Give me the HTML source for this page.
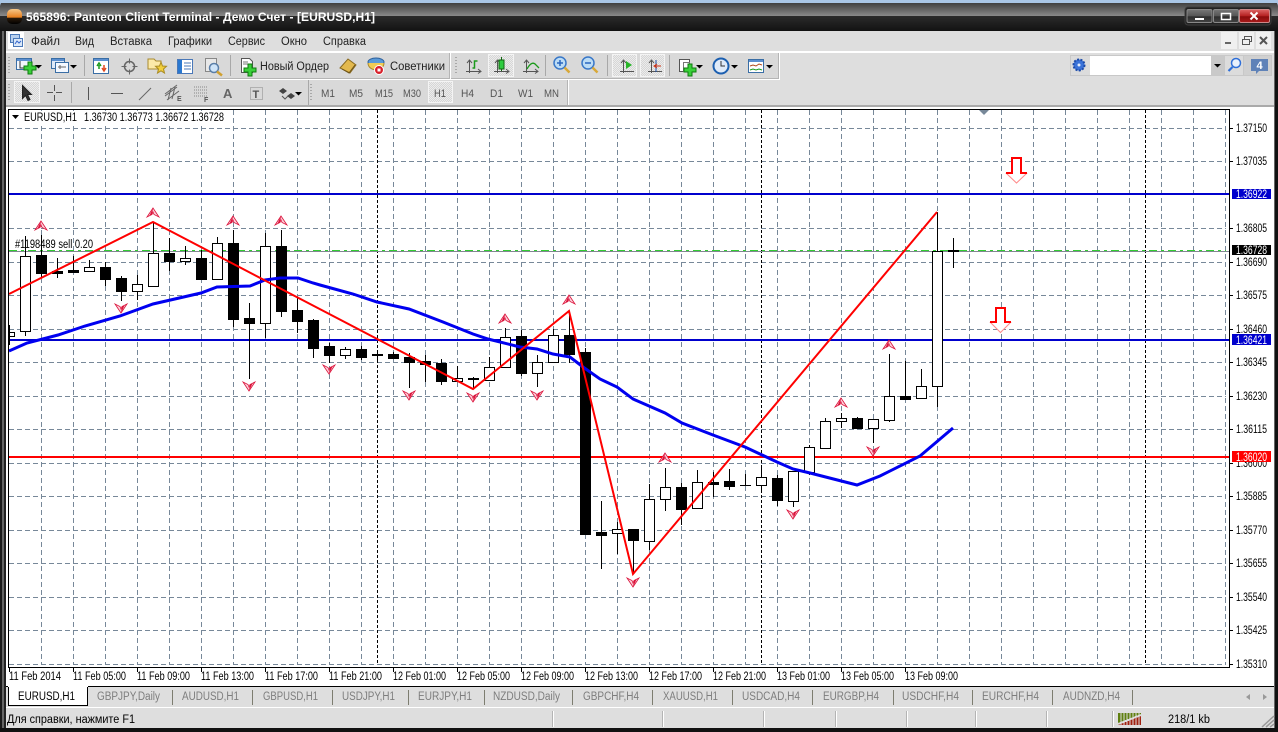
<!DOCTYPE html>
<html><head><meta charset="utf-8"><title>Panteon Client Terminal</title>
<style>
html,body{margin:0;padding:0;background:#000;width:1278px;height:732px;overflow:hidden}
svg{display:block}
text{font-family:"Liberation Sans","Noto Sans CJK SC",sans-serif;font-size:11.5px;fill:#000}
.c{shape-rendering:crispEdges}
.ax text{font-size:11.5px}
.tab text{font-size:11.5px;fill:#7d7d7d}
.menu text{font-size:11.5px;fill:#222}
.tf text{font-size:11px;fill:#555}
</style></head><body>
<svg width="1278" height="732" viewBox="0 0 1278 732" xmlns="http://www.w3.org/2000/svg">
<defs>
<linearGradient id="t1" x1="0" y1="0" x2="0" y2="1"><stop offset="0" stop-color="#3f3f3f"/><stop offset="1" stop-color="#8a8a8a"/></linearGradient>
<linearGradient id="t2" x1="0" y1="0" x2="0" y2="1"><stop offset="0" stop-color="#2b2b2b"/><stop offset="1" stop-color="#141414"/></linearGradient>
<linearGradient id="orb" x1="0" y1="0" x2="0" y2="1"><stop offset="0" stop-color="#f6c88a"/><stop offset=".55" stop-color="#e8801e"/><stop offset=".6" stop-color="#2a1a0a"/><stop offset="1" stop-color="#000"/></linearGradient>
<linearGradient id="btn" x1="0" y1="0" x2="0" y2="1"><stop offset="0" stop-color="#777"/><stop offset=".5" stop-color="#555"/><stop offset=".55" stop-color="#2d2d2d"/><stop offset="1" stop-color="#444"/></linearGradient>
<linearGradient id="red" x1="0" y1="0" x2="0" y2="1"><stop offset="0" stop-color="#d66"/><stop offset=".5" stop-color="#b52020"/><stop offset=".55" stop-color="#8a0c0c"/><stop offset="1" stop-color="#a81a1a"/></linearGradient>
<pattern id="hat" width="2" height="2" patternUnits="userSpaceOnUse"><rect width="2" height="2" fill="#d6d6d6"/><rect width="1" height="1" fill="#ececec"/><rect x="1" y="1" width="1" height="1" fill="#ececec"/></pattern>
<g id="fu"><path d="M0-5L-6 4-1 1.500 0-1 1 1.500 6 4Z" fill="#fbd0da" stroke="#dc143c" stroke-width=".8"/><path d="M0-5L-3.500 2.500-1 1.500Z" fill="#dc143c"/></g>
<g id="fd"><path d="M0 5L-6-4-1-1.500 0 1 1-1.500 6-4Z" fill="#fbd0da" stroke="#dc143c" stroke-width=".8"/><path d="M0 5L3.500-2.500 1-1.500Z" fill="#dc143c"/></g>
<path id="pl" d="M-2-6h4v4h4v4h-4v4h-4v-4h-4v-4h4z" fill="#39d039" stroke="#0e7a0e"/>
<path id="dd" d="M0 0h7l-3.500 3.500z" fill="#000"/>
</defs>

<!-- window frame -->
<rect width="1278" height="732" fill="#111"/>
<rect width="1278" height="3" fill="#a9c6e6"/>
<rect y="3" width="1278" height="13" fill="url(#t1)"/>
<rect y="16" width="1278" height="14" fill="url(#t2)"/>
<path d="M0 0h5Q1 1 0 6ZM1278 0h-5q4 1 5 6Z" fill="#a9c6e6"/>
<g class="c"><rect x="2" y="31" width="2" height="697" fill="#555"/><rect x="1274" y="31" width="1" height="697" fill="#666"/></g>
<rect x="7" y="9" width="15" height="15" rx="5" fill="url(#orb)"/>
<text x="26" y="21" style="font-size:12px;fill:#fff;font-weight:700" textLength="349" lengthAdjust="spacing">565896: Panteon Client Terminal - Демо Счет - [EURUSD,H1]</text>
<!-- caption buttons -->
<rect x="1185" y="7" width="86" height="18" rx="3" fill="#222" stroke="#3c3c3c"/>
<rect x="1187" y="9.500" width="25" height="13" rx="1.500" fill="url(#btn)" stroke="#888"/>
<rect x="1213.500" y="9.500" width="25" height="13" rx="1.500" fill="url(#btn)" stroke="#888"/>
<rect x="1239.500" y="9.500" width="30" height="13" rx="1.500" fill="url(#red)" stroke="#c88"/>
<rect x="1195" y="18" width="9" height="2" fill="#fff"/>
<rect x="1221.500" y="13.500" width="9" height="6" fill="none" stroke="#fff" stroke-width="1.500"/>
<path d="M1250.500 12.500l7 7m0-7l-7 7" stroke="#fff" stroke-width="2" fill="none"/>

<!-- client -->
<g class="c">
<rect x="6" y="31" width="1268" height="697" fill="#dedede"/>
<rect x="6" y="51" width="1268" height="2" fill="#fff"/>
<rect x="6" y="53" width="1268" height="52" fill="#dedede"/>
<rect x="6" y="53" width="444" height="26" fill="#d9d9d9"/>
<rect x="450" y="53" width="329" height="26" fill="#d9d9d9"/>
<rect x="6" y="78" width="773" height="1" fill="#b5b5b5"/>
<rect x="6" y="79" width="773" height="1" fill="#fff"/>
<rect x="449" y="53" width="1" height="26" fill="#b5b5b5"/>
<rect x="450" y="53" width="1" height="26" fill="#fff"/>
<rect x="778" y="53" width="1" height="26" fill="#b5b5b5"/>
<rect x="779" y="53" width="1" height="27" fill="#fff"/>
<rect x="6" y="80" width="562" height="25" fill="#d9d9d9"/>
<rect x="567" y="80" width="1" height="25" fill="#b5b5b5"/>
<rect x="568" y="80" width="1" height="25" fill="#fff"/>
<rect x="6" y="105" width="1268" height="2" fill="#aaa"/>
<rect x="6" y="107" width="1268" height="1" fill="#fff"/>
</g>

<!-- menu -->
<rect x="8" y="32" width="16" height="17" fill="#fff" class="c"/>
<rect x="10.500" y="34.500" width="9" height="8" fill="#b8d0ee" stroke="#4a78b8"/>
<rect x="13.500" y="38.500" width="9" height="8" fill="#dbe8f8" stroke="#4a78b8"/>
<path d="M15 44l2-3 2 2 2-2" stroke="#36c" fill="none"/>
<g class="menu">
<text x="31" y="45" textLength="29" lengthAdjust="spacingAndGlyphs">Файл</text>
<text x="75" y="45" textLength="19" lengthAdjust="spacingAndGlyphs">Вид</text>
<text x="110" y="45" textLength="42" lengthAdjust="spacingAndGlyphs">Вставка</text>
<text x="168" y="45" textLength="44" lengthAdjust="spacingAndGlyphs">Графики</text>
<text x="228" y="45" textLength="37" lengthAdjust="spacingAndGlyphs">Сервис</text>
<text x="281" y="45" textLength="26" lengthAdjust="spacingAndGlyphs">Окно</text>
<text x="323" y="45" textLength="43" lengthAdjust="spacingAndGlyphs">Справка</text>
</g>
<g class="c">
<rect x="1221" y="32" width="16" height="17" fill="#f0f0f0"/><rect x="1239" y="32" width="15" height="17" fill="#f0f0f0"/><rect x="1256" y="32" width="15" height="17" fill="#f0f0f0"/>
<rect x="1225" y="42" width="6" height="2" fill="#666"/>
</g>
<rect x="1242.500" y="39.500" width="7" height="5" fill="none" stroke="#555"/><path d="M1244.500 39v-2.500h7v5h-2" fill="none" stroke="#555"/>
<path d="M1260 37l7 7m0-7l-7 7" stroke="#555" stroke-width="2" fill="none"/>

<!-- grips and separators -->
<g class="c">
<path d="M8 57h2v1h-2zM8 60h2v1h-2zM8 63h2v1h-2zM8 66h2v1h-2zM8 69h2v1h-2zM8 72h2v1h-2zM8 84h2v1h-2zM8 87h2v1h-2zM8 90h2v1h-2zM8 93h2v1h-2zM8 96h2v1h-2zM8 99h2v1h-2zM455 57h2v1h-2zM455 60h2v1h-2zM455 63h2v1h-2zM455 66h2v1h-2zM455 69h2v1h-2zM455 72h2v1h-2zM310 84h2v1h-2zM310 87h2v1h-2zM310 90h2v1h-2zM310 93h2v1h-2zM310 96h2v1h-2zM310 99h2v1h-2z" fill="#a8a8a8"/>
<path d="M84 55h1v21h-1zM230 55h1v21h-1zM545 55h1v21h-1zM607 55h1v21h-1zM669 55h1v21h-1zM71 82h1v21h-1zM308 80h1v25h-1z" fill="#a8a8a8"/>
<rect x="488.500" y="54.500" width="25" height="22" fill="url(#hat)" stroke="#f4f4f4"/>
<rect x="612.500" y="54.500" width="24" height="22" fill="url(#hat)" stroke="#f4f4f4"/>
<rect x="640.500" y="54.500" width="24" height="22" fill="url(#hat)" stroke="#f4f4f4"/>
<rect x="14.500" y="81.500" width="25" height="21" fill="url(#hat)" stroke="#f4f4f4"/>
<rect x="428.500" y="81.500" width="24" height="21" fill="url(#hat)" stroke="#f4f4f4"/>
</g>

<!-- toolbar 1 icons -->
<rect x="16.500" y="58.500" width="15" height="11" fill="#f2f6fc" stroke="#3a6ea5"/><rect x="17" y="59" width="14" height="2" fill="#5b8fd0"/>
<path d="M20 61v7h9" stroke="#333" fill="none"/>
<use href="#pl" x="30" y="68"/><use href="#dd" x="35" y="65"/>
<rect x="51.500" y="58.500" width="13" height="10" fill="#dfe9f7" stroke="#3a6ea5"/><rect x="55.500" y="62.500" width="13" height="10" fill="#f4f8ff" stroke="#3a6ea5"/><rect x="52" y="59" width="12" height="2" fill="#5b8fd0"/>
<path d="M58 67h8m-6-2v4" stroke="#666" fill="none"/><use href="#dd" x="70" y="65"/>
<rect x="93.500" y="58.500" width="15" height="15" fill="#fff" stroke="#3a6ea5"/><rect x="94" y="59" width="14" height="2" fill="#5b8fd0"/>
<path d="M99 69v-4m-2 1l2-3 2 3" stroke="#1a9a1a" fill="none" stroke-width="1.500"/><path d="M104 65v5m-2-2l2 3 2-3" stroke="#e04a20" fill="none" stroke-width="1.500"/>
<circle cx="129.500" cy="66.500" r="5" fill="none" stroke="#666" stroke-width="1.500"/><path d="M129.500 58.500v5m0 6v5m-8-8h5m6 0h5" stroke="#666" fill="none"/>
<path d="M148 59h6l2 2h5v8h-13z" fill="#fbe9a8" stroke="#a98a30"/><path d="M161 62l1.500 4 4 .3-3 2.700 1 4-3.500-2.200-3.500 2.200 1-4-3-2.700 4-.3z" fill="#f2cf3c" stroke="#a98a20"/>
<rect x="177.500" y="59.500" width="15" height="14" fill="#fff" stroke="#4a78b8"/><rect x="178" y="60" width="4" height="13" fill="#2a78d0"/><path d="M184 63h7m-7 3h7m-7 3h7" stroke="#4a78b8"/>
<rect x="205.500" y="58.500" width="11" height="13" fill="#e8e8e8" stroke="#888"/><circle cx="214" cy="68" r="4.500" fill="#cfe4f8" stroke="#5a7ea8" stroke-width="1.500"/><path d="M217 71.500l5 4" stroke="#d0a030" stroke-width="2.500"/>
<path d="M241.500 58.500h8l3 3v11h-11z" fill="#fff" stroke="#555"/><path d="M243 62h5m-5 2h6" stroke="#777"/><use href="#pl" x="250" y="70"/>
<text x="260" y="70" textLength="69" lengthAdjust="spacingAndGlyphs" style="fill:#222">Новый Ордер</text>
<path d="M340 68l8-9 8 6-6 8z" fill="#e3b94e" stroke="#8a6a20"/><path d="M342 69l7 4 6-8" fill="none" stroke="#6d5418"/>
<ellipse cx="376" cy="62" rx="8" ry="4" fill="#5a9ad8" stroke="#2d5f9a"/><path d="M368 63c0 9 16 9 16 0" fill="#f2cc55" stroke="#a98a30"/><circle cx="379" cy="70" r="4.500" fill="#d8202a" stroke="#fff"/><rect x="377.500" y="68.500" width="3" height="3" fill="#fff"/>
<text x="390" y="70" textLength="55" lengthAdjust="spacingAndGlyphs" style="fill:#222">Советники</text>
<!-- chart type -->
<g fill="none" stroke="#555"><path d="M469.500 60v13M466 71.500h14M467 63l2.500-3 2.500 3M478 69l3 2.500-3 2"/>
<path d="M497.500 60v13M494 71.500h14M495 63l2.500-3 2.500 3M506 69l3 2.500-3 2"/>
<path d="M526.500 60v13M523 71.500h14M524 63l2.500-3 2.500 3M535 69l3 2.500-3 2"/>
<path d="M623.500 60v13M620 71.500h14M621 63l2.500-3 2.500 3"/>
<path d="M651.500 60v13M648 71.500h14M649 63l2.500-3 2.500 3"/></g>
<path d="M472.500 68h2v-7h3" fill="none" stroke="#1a9a1a" stroke-width="1.500"/>
<rect x="499" y="60" width="5" height="9" fill="#2ecc40" stroke="#116611"/><path d="M501.500 57v3m0 9v2" stroke="#116611"/>
<path d="M527 69q5-9 9-4l3 3" fill="none" stroke="#1a9a1a" stroke-width="1.300"/>
<path d="M626 61l6 4-6 4z" fill="#27b527"/>
<path d="M656 60v12" stroke="#1c4fa8"/><path d="M655 66h6m-4-2l-3 2 3 2" stroke="#d03010" fill="none"/>
<!-- zoom -->
<circle cx="560" cy="63" r="6" fill="#bcdcf5" stroke="#3a78c8" stroke-width="1.500"/><path d="M557 63h6m-3-3v6" stroke="#2a66c0" stroke-width="1.500"/><path d="M564.500 67.500l5 5" stroke="#d8a838" stroke-width="2.500"/>
<circle cx="588" cy="63" r="6" fill="#bcdcf5" stroke="#3a78c8" stroke-width="1.500"/><path d="M585 63h6" stroke="#2a66c0" stroke-width="1.500"/><path d="M592.500 67.500l5 5" stroke="#d8a838" stroke-width="2.500"/>
<!-- templates, clock, indicators -->
<rect x="679.500" y="59.500" width="10" height="12" fill="#fff" stroke="#555"/><rect x="683.500" y="62.500" width="6" height="9" fill="#fff" stroke="#777"/><use href="#pl" x="690" y="70"/><use href="#dd" x="696" y="65"/>
<circle cx="721" cy="66" r="7.500" fill="#dfeaf8" stroke="#1c5fb0" stroke-width="2"/><path d="M721 61v5h4" stroke="#333" fill="none"/><use href="#dd" x="731" y="65"/>
<rect x="748.500" y="59.500" width="15" height="13" fill="#fff" stroke="#3a6ea5"/><rect x="749" y="60" width="14" height="2" fill="#5b8fd0"/><path d="M750 66l3-1 3 1 3-2 3 1" stroke="#b04a1a" fill="none"/><path d="M750 70l3-1 3 1 3-1 3 1" stroke="#1a9a1a" fill="none"/><use href="#dd" x="766" y="65"/>

<!-- toolbar 2 icons -->
<path d="M22.500 85.500v13l3-3 2.500 5 2-1-2.500-5h4z" fill="#333" stroke="#222"/>
<g class="c"><path d="M54 85h1v6h-1zM54 95h1v6h-1zM47 92h6v1h-6zM56 92h6v1h-6z" fill="#555"/>
<rect x="88" y="87" width="1" height="13" fill="#555"/><rect x="111" y="93" width="12" height="1" fill="#555"/></g>
<path d="M139 100l12-12" stroke="#666"/>
<path d="M165 96l12-9m-10 13l12-9m-14 3l12-9M171 88l-3 12m7-13l-3 12" stroke="#666" fill="none"/>
<text x="177" y="101" style="font-size:7px;fill:#555;font-weight:700">E</text>
<path d="M194 87h14M194 90h14M194 93h14M194 96h14" stroke="#888" stroke-dasharray="1 1"/>
<text x="204" y="102" style="font-size:7px;fill:#555;font-weight:700">F</text>
<text x="223" y="98" style="font-size:13px;fill:#666;font-weight:700">A</text>
<rect x="250.500" y="87.500" width="12" height="12" fill="none" stroke="#888" stroke-dasharray="1 1"/>
<text x="252.500" y="98" style="font-size:11px;fill:#555;font-weight:700">T</text>
<path d="M279 91l4-3 4 3-4 3zM287 96l4-3 4 3-4 3z" fill="#444"/><path d="M282 96l3 3 3-3" stroke="#555" fill="none"/><use href="#dd" x="295" y="92"/>
<g class="tf">
<text x="321" y="97" textLength="14" lengthAdjust="spacingAndGlyphs">M1</text>
<text x="349" y="97" textLength="14" lengthAdjust="spacingAndGlyphs">M5</text>
<text x="375" y="97" textLength="18" lengthAdjust="spacingAndGlyphs">M15</text>
<text x="403" y="97" textLength="18" lengthAdjust="spacingAndGlyphs">M30</text>
<text x="434" y="97" textLength="12" lengthAdjust="spacingAndGlyphs">H1</text>
<text x="461" y="97" textLength="13" lengthAdjust="spacingAndGlyphs">H4</text>
<text x="490" y="97" textLength="13" lengthAdjust="spacingAndGlyphs">D1</text>
<text x="518" y="97" textLength="15" lengthAdjust="spacingAndGlyphs">W1</text>
<text x="544" y="97" textLength="15" lengthAdjust="spacingAndGlyphs">MN</text>
</g>

<!-- search area -->
<g class="c">
<rect x="1070" y="55" width="202" height="21" fill="#c8c8c8"/>
<rect x="1071" y="56" width="19" height="19" fill="#dcdcdc"/>
<rect x="1090" y="56" width="121" height="19" fill="#fff"/>
<rect x="1211" y="56" width="13" height="19" fill="#c9c9c9"/>
<rect x="1225" y="56" width="18" height="19" fill="#dcdcdc"/>
<rect x="1244" y="56" width="27" height="19" fill="#d0d0d0"/>
</g>
<circle cx="1079" cy="65" r="5.500" fill="#3a72d8" stroke="#1c4aa8" stroke-width="2" stroke-dasharray="2 1.400"/><circle cx="1079" cy="65" r="1.500" fill="#dfe9fb"/>
<use href="#dd" x="1214" y="64"/>
<circle cx="1236" cy="63" r="4.500" fill="#e8f0fc" stroke="#2f6fd8" stroke-width="1.500"/><path d="M1232.500 67l-4 4" stroke="#2f6fd8" stroke-width="2.200"/>
<path d="M1251 59h17v12h-9l-3 3v-3h-5z" fill="#5f82b8"/>
<text x="1256.500" y="69" style="font-size:11px;font-weight:700;fill:#fff">4</text>

<!-- chart -->
<rect x="6" y="108" width="1268" height="600" fill="#fff" class="c"/>
<g class="c"><rect x="0" y="31" width="2" height="697" fill="#1a1a1a"/><rect x="2" y="31" width="2" height="697" fill="#666"/><rect x="4" y="31" width="2" height="697" fill="#222"/></g>
<g class="c" fill="none" stroke="#778899" stroke-dasharray="5 3">
<path d="M9 128.500H1226M9 161.500H1226M9 194.500H1226M9 228.500H1226M9 262.500H1226M9 295.500H1226M9 329.500H1226M9 362.500H1226M9 396.500H1226M9 429.500H1226M9 463.500H1226M9 496.500H1226M9 530.500H1226M9 563.500H1226M9 597.500H1226M9 630.500H1226M9 664.500H1226"/>
<path d="M41.500 110V665M73.500 110V665M105.500 110V665M137.500 110V665M169.500 110V665M201.500 110V665M233.500 110V665M265.500 110V665M297.500 110V665M329.500 110V665M361.500 110V665M393.500 110V665M425.500 110V665M457.500 110V665M489.500 110V665M521.500 110V665M553.500 110V665M585.500 110V665M617.500 110V665M649.500 110V665M681.500 110V665M713.500 110V665M745.500 110V665M777.500 110V665M809.500 110V665M841.500 110V665M873.500 110V665M905.500 110V665M937.500 110V665M969.500 110V665M1001.500 110V665M1033.500 110V665M1065.500 110V665M1097.500 110V665M1129.500 110V665M1161.500 110V665M1193.500 110V665M1225.500 110V665"/>
</g>
<path class="c" d="M377.500 110V665M761.500 110V665M1145.500 110V665" stroke="#000" fill="none" stroke-dasharray="3 2"/>
<!-- chart text -->
<rect x="10" y="111" width="216" height="13" fill="#fff" class="c"/>
<path d="M12 115h7l-3.500 4z" fill="#000"/>
<text x="24" y="121" textLength="53" lengthAdjust="spacingAndGlyphs">EURUSD,H1</text>
<text x="84" y="121" textLength="140" lengthAdjust="spacingAndGlyphs">1.36730 1.36773 1.36672 1.36728</text>
<text x="15" y="248" textLength="78" lengthAdjust="spacingAndGlyphs">#1198489 sell 0.20</text>
<!-- level lines -->
<g class="c">
<rect x="9" y="251" width="1220" height="1" fill="#808890"/>
<path d="M9 250.500H1226" stroke="#32cd32" stroke-width="1" stroke-dasharray="8 4 3 4 8 4 3 4"/>
<rect x="9" y="193" width="1220" height="2" fill="#0000cd"/>
<rect x="9" y="339" width="1220" height="2" fill="#0000cd"/>
<rect x="9" y="456" width="1220" height="2" fill="#f00"/>
</g>
<!-- candles -->
<g class="c">
<path fill="none" stroke="#000" d="M9.500 325V345M25.500 236V336M41.500 235V277M57.500 258V278M73.500 256V273M89.500 260V272M105.500 262V286M121.500 276V301M137.500 275V300M153.500 222V253M169.500 238V271M185.500 246V265M201.500 250V279M217.500 237V243M233.500 230V327M249.500 303V379M265.500 233V338M281.500 230V317M297.500 298V333M313.500 319V358M329.500 343V363M345.500 347V359M361.500 346V360M377.500 350V360M393.500 352V358M409.500 353V388M425.500 355V382M441.500 359V385M457.500 366V381M473.500 377V388M489.500 357V380M505.500 328V367M521.500 330V376M537.500 355V387M553.500 329V362M569.500 311V363M585.500 348V534M601.500 501V569M617.500 522V554M633.500 529V573M649.500 484V550M665.500 468V511M681.500 483V525M697.500 470V509M713.500 472V497M729.500 469V490M745.500 474V486M761.500 468V490M777.500 475V506M793.500 471V507M809.500 445V475M825.500 418V448M841.500 413V428M857.500 417V429M873.500 419V443M889.500 354V422M905.500 361V399M921.500 369V398M937.500 212V407M953.500 238V268"/>
<g fill="#fff" stroke="#000">
<rect x="9.500" y="332.500" width="5" height="4"/>
<rect x="20.500" y="256.500" width="10" height="75"/><rect x="84.500" y="267.500" width="10" height="4"/><rect x="132.500" y="284.500" width="10" height="7"/><rect x="148.500" y="253.500" width="10" height="33"/><rect x="180.500" y="258.500" width="10" height="3"/><rect x="212.500" y="243.500" width="10" height="36"/><rect x="260.500" y="246.500" width="10" height="77"/><rect x="340.500" y="349.500" width="10" height="6"/><rect x="452.500" y="378.500" width="10" height="3"/><rect x="484.500" y="367.500" width="10" height="13"/><rect x="500.500" y="337.500" width="10" height="30"/><rect x="532.500" y="362.500" width="10" height="11"/><rect x="548.500" y="335.500" width="10" height="27"/><rect x="612.500" y="529.500" width="10" height="4"/><rect x="644.500" y="499.500" width="10" height="42"/><rect x="660.500" y="487.500" width="10" height="12"/><rect x="692.500" y="482.500" width="10" height="26"/><rect x="756.500" y="477.500" width="10" height="8"/><rect x="788.500" y="471.500" width="10" height="30"/><rect x="804.500" y="447.500" width="10" height="25"/><rect x="820.500" y="421.500" width="10" height="27"/><rect x="836.500" y="418.500" width="10" height="3"/><rect x="868.500" y="419.500" width="10" height="9"/><rect x="884.500" y="396.500" width="10" height="24"/><rect x="916.500" y="386.500" width="10" height="12"/><rect x="932.500" y="251.500" width="10" height="135"/>
</g>
<g fill="#000">
<rect x="36" y="255" width="11" height="19"/><rect x="52" y="271" width="11" height="3"/><rect x="68" y="270" width="11" height="3"/><rect x="100" y="267" width="11" height="13"/><rect x="116" y="278" width="11" height="14"/><rect x="164" y="253" width="11" height="9"/><rect x="196" y="258" width="11" height="22"/><rect x="228" y="243" width="11" height="77"/><rect x="244" y="318" width="11" height="6"/><rect x="276" y="246" width="11" height="66"/><rect x="292" y="310" width="11" height="12"/><rect x="308" y="320" width="11" height="29"/><rect x="324" y="346" width="11" height="10"/><rect x="356" y="349" width="11" height="9"/><rect x="372" y="354" width="11" height="2"/><rect x="388" y="354" width="11" height="5"/><rect x="404" y="357" width="11" height="6"/><rect x="420" y="361" width="11" height="4"/><rect x="436" y="363" width="11" height="19"/><rect x="468" y="378" width="11" height="2"/><rect x="516" y="336" width="11" height="38"/><rect x="564" y="335" width="11" height="20"/><rect x="580" y="352" width="11" height="183"/><rect x="596" y="532" width="11" height="4"/><rect x="628" y="529" width="11" height="12"/><rect x="676" y="487" width="11" height="23"/><rect x="708" y="482" width="11" height="3"/><rect x="724" y="481" width="11" height="6"/><rect x="740" y="485" width="11" height="1"/><rect x="772" y="478" width="11" height="23"/><rect x="852" y="418" width="11" height="11"/><rect x="900" y="396" width="11" height="4"/><rect x="948" y="250" width="11" height="2"/>
</g>
</g>
<!-- MA and zigzag -->
<path d="M9 351L27 343 58 335 85 326 120 316 153 304 201 293 217 287 250 286 265 280 280 278 298 278 313 283 320 285 353 294 377 302 409 309 443 322 473 334 488 339 520 347 537 349 553 354 570 357 583 367 600 379 617 387 633 399 665 413 682 423 713 435 745 447 777 462 793 469 810 473 857 485 880 476 920 456 953 428" fill="none" stroke="#0000f0" stroke-width="3"/>
<path d="M9 294L153 222 473 389 569 311 633 574 937 212" fill="none" stroke="#f00" stroke-width="2"/>
<!-- fractals -->
<g>
<use href="#fu" x="41" y="226"/><use href="#fu" x="153" y="213"/><use href="#fu" x="233" y="221"/><use href="#fu" x="281" y="221"/><use href="#fu" x="505" y="319"/><use href="#fu" x="569" y="300"/><use href="#fu" x="665" y="458"/><use href="#fu" x="841" y="403"/><use href="#fu" x="889" y="345"/>
<use href="#fd" x="121" y="308"/><use href="#fd" x="249" y="386"/><use href="#fd" x="329" y="369"/><use href="#fd" x="409" y="395"/><use href="#fd" x="473" y="397"/><use href="#fd" x="537" y="395"/><use href="#fd" x="633" y="582"/><use href="#fd" x="793" y="514"/><use href="#fd" x="873" y="451"/>
</g>
<!-- big arrows -->
<path d="M1006.500 173.500h5.500v-16h9v16h5.500l-10 9.500z" fill="#fff" stroke="#ff8a8a"/>
<path d="M1006 173h6v-15h9v15h6" fill="none" stroke="#f00" stroke-width="2"/>
<path d="M990.500 322.500h5.500v-15h9v15h5.500l-10 10z" fill="#fff" stroke="#ff8a8a"/>
<path d="M990 322h6v-14h9v14h6" fill="none" stroke="#f00" stroke-width="2"/>
<path d="M979 110h10l-5 5z" fill="#778899"/>
<!-- frame -->
<g class="c" fill="#000">
<rect x="8" y="109" width="1222" height="1"/><rect x="8" y="109" width="1" height="559"/><rect x="1229" y="109" width="1" height="559"/><rect x="8" y="667" width="1222" height="1"/>
</g>
<!-- axis ticks -->
<path class="c" stroke="#000" fill="none" d="M1230 128.500h3M1230 161.500h3M1230 228.500h3M1230 262.500h3M1230 295.500h3M1230 329.500h3M1230 362.500h3M1230 396.500h3M1230 429.500h3M1230 463.500h3M1230 496.500h3M1230 530.500h3M1230 563.500h3M1230 597.500h3M1230 630.500h3M1230 664.500h3M9.500 668v4M73.500 668v4M137.500 668v4M201.500 668v4M265.500 668v4M329.500 668v4M393.500 668v4M457.500 668v4M521.500 668v4M585.500 668v4M649.500 668v4M713.500 668v4M777.500 668v4M841.500 668v4M905.500 668v4"/>
<!-- price labels -->
<g class="ax">
<text x="1236" y="132" textLength="31" lengthAdjust="spacingAndGlyphs">1.37150</text>
<text x="1236" y="165" textLength="31" lengthAdjust="spacingAndGlyphs">1.37035</text>
<text x="1236" y="232" textLength="31" lengthAdjust="spacingAndGlyphs">1.36805</text>
<text x="1236" y="266" textLength="31" lengthAdjust="spacingAndGlyphs">1.36690</text>
<text x="1236" y="299" textLength="31" lengthAdjust="spacingAndGlyphs">1.36575</text>
<text x="1236" y="333" textLength="31" lengthAdjust="spacingAndGlyphs">1.36460</text>
<text x="1236" y="366" textLength="31" lengthAdjust="spacingAndGlyphs">1.36345</text>
<text x="1236" y="400" textLength="31" lengthAdjust="spacingAndGlyphs">1.36230</text>
<text x="1236" y="433" textLength="31" lengthAdjust="spacingAndGlyphs">1.36115</text>
<text x="1236" y="467" textLength="31" lengthAdjust="spacingAndGlyphs">1.36000</text>
<text x="1236" y="500" textLength="31" lengthAdjust="spacingAndGlyphs">1.35885</text>
<text x="1236" y="534" textLength="31" lengthAdjust="spacingAndGlyphs">1.35770</text>
<text x="1236" y="567" textLength="31" lengthAdjust="spacingAndGlyphs">1.35655</text>
<text x="1236" y="601" textLength="31" lengthAdjust="spacingAndGlyphs">1.35540</text>
<text x="1236" y="634" textLength="31" lengthAdjust="spacingAndGlyphs">1.35425</text>
<text x="1236" y="668" textLength="31" lengthAdjust="spacingAndGlyphs">1.35310</text>
<g class="c"><rect x="1232" y="189" width="39" height="10" fill="#0000cd"/><rect x="1232" y="245" width="39" height="10" fill="#000"/><rect x="1232" y="334" width="39" height="11" fill="#0000cd"/><rect x="1232" y="451" width="39" height="11" fill="#f00"/></g>
<text x="1236" y="198" textLength="31" lengthAdjust="spacingAndGlyphs" style="fill:#fff">1.36922</text>
<text x="1236" y="254" textLength="31" lengthAdjust="spacingAndGlyphs" style="fill:#fff">1.36728</text>
<text x="1236" y="344" textLength="31" lengthAdjust="spacingAndGlyphs" style="fill:#fff">1.36421</text>
<text x="1236" y="461" textLength="31" lengthAdjust="spacingAndGlyphs" style="fill:#fff">1.36020</text>
<!-- time labels -->
<text x="9" y="680" textLength="52" lengthAdjust="spacingAndGlyphs">11 Feb 2014</text>
<text x="73" y="680" textLength="53" lengthAdjust="spacingAndGlyphs">11 Feb 05:00</text>
<text x="137" y="680" textLength="53" lengthAdjust="spacingAndGlyphs">11 Feb 09:00</text>
<text x="201" y="680" textLength="53" lengthAdjust="spacingAndGlyphs">11 Feb 13:00</text>
<text x="265" y="680" textLength="53" lengthAdjust="spacingAndGlyphs">11 Feb 17:00</text>
<text x="329" y="680" textLength="53" lengthAdjust="spacingAndGlyphs">11 Feb 21:00</text>
<text x="393" y="680" textLength="53" lengthAdjust="spacingAndGlyphs">12 Feb 01:00</text>
<text x="457" y="680" textLength="53" lengthAdjust="spacingAndGlyphs">12 Feb 05:00</text>
<text x="521" y="680" textLength="53" lengthAdjust="spacingAndGlyphs">12 Feb 09:00</text>
<text x="585" y="680" textLength="53" lengthAdjust="spacingAndGlyphs">12 Feb 13:00</text>
<text x="649" y="680" textLength="53" lengthAdjust="spacingAndGlyphs">12 Feb 17:00</text>
<text x="713" y="680" textLength="53" lengthAdjust="spacingAndGlyphs">12 Feb 21:00</text>
<text x="777" y="680" textLength="53" lengthAdjust="spacingAndGlyphs">13 Feb 01:00</text>
<text x="841" y="680" textLength="53" lengthAdjust="spacingAndGlyphs">13 Feb 05:00</text>
<text x="905" y="680" textLength="53" lengthAdjust="spacingAndGlyphs">13 Feb 09:00</text>
</g>
<!-- tabs -->
<g class="c">
<rect x="6" y="686" width="1268" height="1" fill="#000"/>
<rect x="6" y="687" width="1268" height="21" fill="#dedede"/>
<rect x="8" y="686" width="80" height="20" fill="#fff"/>
<path d="M8.500 687V705.500H87.500V687" fill="none" stroke="#000"/>
<rect x="6" y="707" width="1268" height="1" fill="#fff"/>
<path d="M172.500 690v15M252.500 690v15M332.500 690v15M408.500 690v15M484.500 690v15M572.500 690v15M652.500 690v15M732.500 690v15M812.500 690v15M893.500 690v15M972.500 690v15M1052.500 690v15M1132.500 690v15" stroke="#7d7d70" fill="none"/>
</g>
<text x="18" y="700" textLength="57" lengthAdjust="spacingAndGlyphs">EURUSD,H1</text>
<g class="tab">
<text x="97" y="700" textLength="63" lengthAdjust="spacingAndGlyphs">GBPJPY,Daily</text>
<text x="182" y="700" textLength="57" lengthAdjust="spacingAndGlyphs">AUDUSD,H1</text>
<text x="263" y="700" textLength="55" lengthAdjust="spacingAndGlyphs">GBPUSD,H1</text>
<text x="342" y="700" textLength="53" lengthAdjust="spacingAndGlyphs">USDJPY,H1</text>
<text x="418" y="700" textLength="54" lengthAdjust="spacingAndGlyphs">EURJPY,H1</text>
<text x="493" y="700" textLength="67" lengthAdjust="spacingAndGlyphs">NZDUSD,Daily</text>
<text x="583" y="700" textLength="56" lengthAdjust="spacingAndGlyphs">GBPCHF,H4</text>
<text x="663" y="700" textLength="55" lengthAdjust="spacingAndGlyphs">XAUUSD,H1</text>
<text x="742" y="700" textLength="58" lengthAdjust="spacingAndGlyphs">USDCAD,H4</text>
<text x="823" y="700" textLength="56" lengthAdjust="spacingAndGlyphs">EURGBP,H4</text>
<text x="902" y="700" textLength="57" lengthAdjust="spacingAndGlyphs">USDCHF,H4</text>
<text x="982" y="700" textLength="57" lengthAdjust="spacingAndGlyphs">EURCHF,H4</text>
<text x="1063" y="700" textLength="57" lengthAdjust="spacingAndGlyphs">AUDNZD,H4</text>
</g>
<path d="M1250 694l-4 3 4 3zM1263 694l4 3-4 3z" fill="#999"/>
<!-- status -->
<text x="7" y="723" textLength="128" lengthAdjust="spacingAndGlyphs">Для справки, нажмите F1</text>
<path class="c" d="M553.500 711v16M663.500 711v16M764.500 711v16M836.500 711v16M907.500 711v16M976.500 711v16M1047.500 711v16M1113.500 711v16" stroke="#fff" fill="none"/>
<path class="c" d="M552.500 711v16M662.500 711v16M763.500 711v16M835.500 711v16M906.500 711v16M975.500 711v16M1046.500 711v16M1112.500 711v16" stroke="#b4b4b4" fill="none"/>
<g class="c">
<path d="M1118 713h23v1l-23 9z" fill="#5f7f10"/>
<path d="M1118 725l23-9v9z" fill="#a02010"/>
<path d="M1121 713v12M1124 713v12M1127 713v12M1130 713v12M1133 713v12M1136 713v12M1139 713v12" stroke="#dedede" fill="none"/>
</g>
<text x="1168" y="723" textLength="42" lengthAdjust="spacingAndGlyphs">218/1 kb</text>
<path d="M1274 716l-12 11M1274 720l-8 7M1274 724l-4 3" stroke="#999" fill="none" stroke-width="1.500"/>
</svg>
</body></html>
